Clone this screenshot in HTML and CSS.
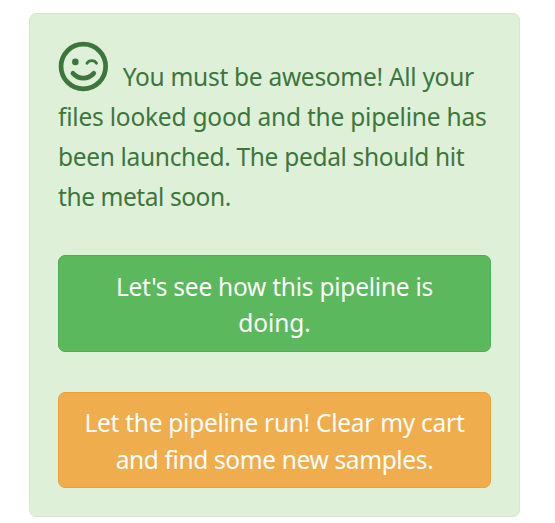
FILE: index.html
```html
<!DOCTYPE html>
<html lang="en">
<head>
<meta charset="utf-8">
<title>Pipeline launched</title>
<link rel="stylesheet" href="styles.css">
</head>
<body>
<main class="alert">
  <p class="message">
    <span class="line line-first">
      <svg class="icon" viewBox="-0.35 -0.5 50 50" aria-hidden="true">
        <circle class="stroke face" cx="25" cy="25" r="22.3"/>
        <circle class="eye" cx="17" cy="20.4" r="3.3"/>
        <path class="stroke wink" d="M28.6 21.8C30.6 18.2 36.2 18.2 38.2 21.8"/>
        <path class="stroke smile" d="M14.6 31.8C20.5 38.2 29.5 38.2 35.4 31.8"/>
      </svg>
      <span class="lead">You must be awesome! All your</span>
    </span>
    <span class="line l2">files looked good and the pipeline has</span>
    <span class="line l3">been launched. The pedal should hit</span>
    <span class="line l4">the metal soon.</span>
  </p>
  <button class="btn btn-success"><span class="b1">Let's see how this pipeline is</span><span class="b2">doing.</span></button>
  <button class="btn btn-warning"><span class="b3">Let the pipeline run! Clear my cart</span><span class="b4">and find some new samples.</span></button>
</main>
</body>
</html>
```
FILE: styles.css
```css
* { box-sizing: border-box; }
body {
  margin: 0;
  background: #fff;
  font-family: "Noto Sans", "Open Sans", sans-serif;
  font-size: 24.5px;
}
.alert {
  width: 491px;
  height: 504px;
  margin: 13px 0 0 29px;
  padding: 28px;
  border: 1px solid #d6e9c6;
  border-radius: 7px;
  background: #dff0d8;
  color: #3c763d;
}
.message { margin: 0 0 38px; line-height: 40px; }
.line { display: block; white-space: nowrap; }
.line-first { display: flex; align-items: flex-end; height: 55px; }
.icon { width: 50px; height: 50px; margin: 0 14.7px 6px 0; flex: none; overflow: visible; }
.stroke { fill: none; stroke: #3c763d; stroke-linecap: round; }
.face { stroke-width: 4.7; }
.eye { fill: #3c763d; }
.wink { stroke-width: 2.8; }
.smile { stroke-width: 4.7; }
.lead { letter-spacing: -0.29px; }
.l2 { letter-spacing: -0.22px; }
.l3 { letter-spacing: -0.32px; }
.l4 { letter-spacing: -0.43px; }
.b1 { letter-spacing: -0.24px; }
.b2 { letter-spacing: -0.1px; }
.b3 { letter-spacing: -0.28px; }
.b4 { letter-spacing: -0.37px; }
.btn {
  display: flex;
  flex-direction: column;
  align-items: center;
  justify-content: center;
  width: 433px;
  height: 97px;
  padding: 3px 0 0;
  border: 1px solid;
  border-radius: 7px;
  color: #fff;
  font: inherit;
  line-height: 36.5px;
  white-space: nowrap;
}
.btn-success { background: #5cb85c; border-color: #4cae4c; }
.btn-warning { height: 96px; margin-top: 40px; background: #f0ad4e; border-color: #eea236; }
```
